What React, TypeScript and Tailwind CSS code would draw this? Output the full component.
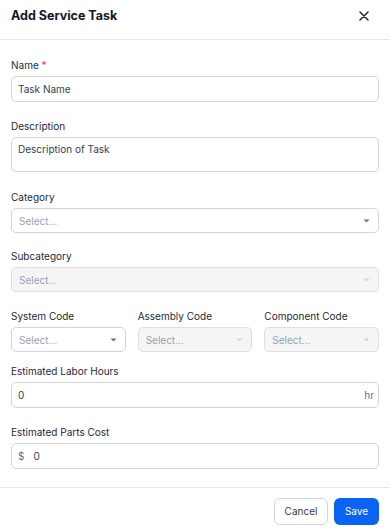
import React from 'react';

const FONT = { fontFamily: 'Inter, "Noto Sans", sans-serif' };

function Caret({ faded = false }: { faded?: boolean }) {
  return (
    <svg width="7" height="4" viewBox="0 0 7 4" className={faded ? 'text-gray-300' : 'text-gray-500'}>
      <path d="M0.5 0.5h6L3.5 3.5z" fill="currentColor" />
    </svg>
  );
}

function Label({ text, required = false }: { text: string; required?: boolean }) {
  return (
    <div className="text-[10px] leading-[14px] font-normal text-[#1d2939]">
      {text}
      {required && <span className="text-red-500"> *</span>}
    </div>
  );
}

function Select({ disabled = false }: { disabled?: boolean }) {
  return (
    <div
      className={`flex h-[25px] items-center justify-between rounded-[5px] border pl-[7px] pr-[8px] ${
        disabled ? 'bg-[#f5f5f6] border-[#dcdfe4]' : 'bg-white border-[#d0d5dd]'
      }`}
    >
      <span className="text-[10px] leading-[12px] text-[#98a2b3]">Select...</span>
      <Caret faded={disabled} />
    </div>
  );
}

export default function App() {
  return (
    <div className="w-[390px] h-[530px] overflow-hidden bg-white text-[#101828]" style={FONT}>
      {/* Header */}
      <div className="flex items-start justify-between border-b border-[#e4e7ec] px-[11px] pt-[7px] pb-[14px]">
        <h2 className="text-[12.5px] leading-[18px] font-bold text-[#101828]">Add Service Task</h2>
        <svg width="10" height="10" viewBox="0 0 10 10" className="mr-[10px] mt-[4px] text-[#1d2939]">
          <path d="M1 1l8 8M9 1l-8 8" stroke="currentColor" strokeWidth="1.5" strokeLinecap="round" />
        </svg>
      </div>

      {/* Body */}
      <div className="flex flex-col px-[11px] pt-[18px] pb-[18px]">
        <div className="flex flex-col gap-[4px]">
          <Label text="Name" required />
          <div className="flex h-[26px] items-center rounded-[5px] border border-[#d0d5dd] px-[6px]">
            <span className="text-[10px] leading-[12px] text-[#344054]">Task Name</span>
          </div>
        </div>

        <div className="mt-[17px] flex flex-col gap-[4px]">
          <Label text="Description" />
          <div className="h-[35px] rounded-[5px] border border-[#d0d5dd] px-[6px] pt-[5px]">
            <div className="text-[10px] leading-[12px] text-[#344054]">Description of Task</div>
          </div>
        </div>

        <div className="mt-[18px] flex flex-col gap-[4px]">
          <Label text="Category" />
          <Select />
        </div>

        <div className="mt-[16px] flex flex-col gap-[4px]">
          <Label text="Subcategory" />
          <Select disabled />
        </div>

        <div className="mt-[17px] grid grid-cols-3 gap-x-[12px]">
          <div className="flex flex-col gap-[4px]">
            <Label text="System Code" />
            <Select />
          </div>
          <div className="flex flex-col gap-[4px]">
            <Label text="Assembly Code" />
            <Select disabled />
          </div>
          <div className="flex flex-col gap-[4px]">
            <Label text="Component Code" />
            <Select disabled />
          </div>
        </div>

        <div className="mt-[12px] flex flex-col gap-[4px]">
          <Label text="Estimated Labor Hours" />
          <div className="flex h-[26px] items-center justify-between rounded-[5px] border border-[#d0d5dd] pl-[6px] pr-[4px]">
            <span className="text-[10px] leading-[12px] text-[#344054]">0</span>
            <span className="text-[10px] leading-[12px] text-[#667085]">hr</span>
          </div>
        </div>

        <div className="mt-[17px] flex flex-col gap-[4px]">
          <Label text="Estimated Parts Cost" />
          <div className="flex h-[26px] items-center gap-[9px] rounded-[5px] border border-[#d0d5dd] px-[6px]">
            <span className="text-[10px] leading-[12px] text-[#667085]">$</span>
            <span className="text-[10px] leading-[12px] text-[#344054]">0</span>
          </div>
        </div>
      </div>

      {/* Footer */}
      <div className="flex justify-end gap-[6px] border-t border-[#e4e7ec] px-[11px] pt-[10px]">
        <button className="h-[27px] w-[54px] rounded-[6px] border border-[#d0d5dd] bg-white text-[10px] text-[#344054]">
          Cancel
        </button>
        <button className="h-[27px] w-[45px] rounded-[6px] bg-[#0b63f6] text-[10px] text-white">
          Save
        </button>
      </div>
    </div>
  );
}
